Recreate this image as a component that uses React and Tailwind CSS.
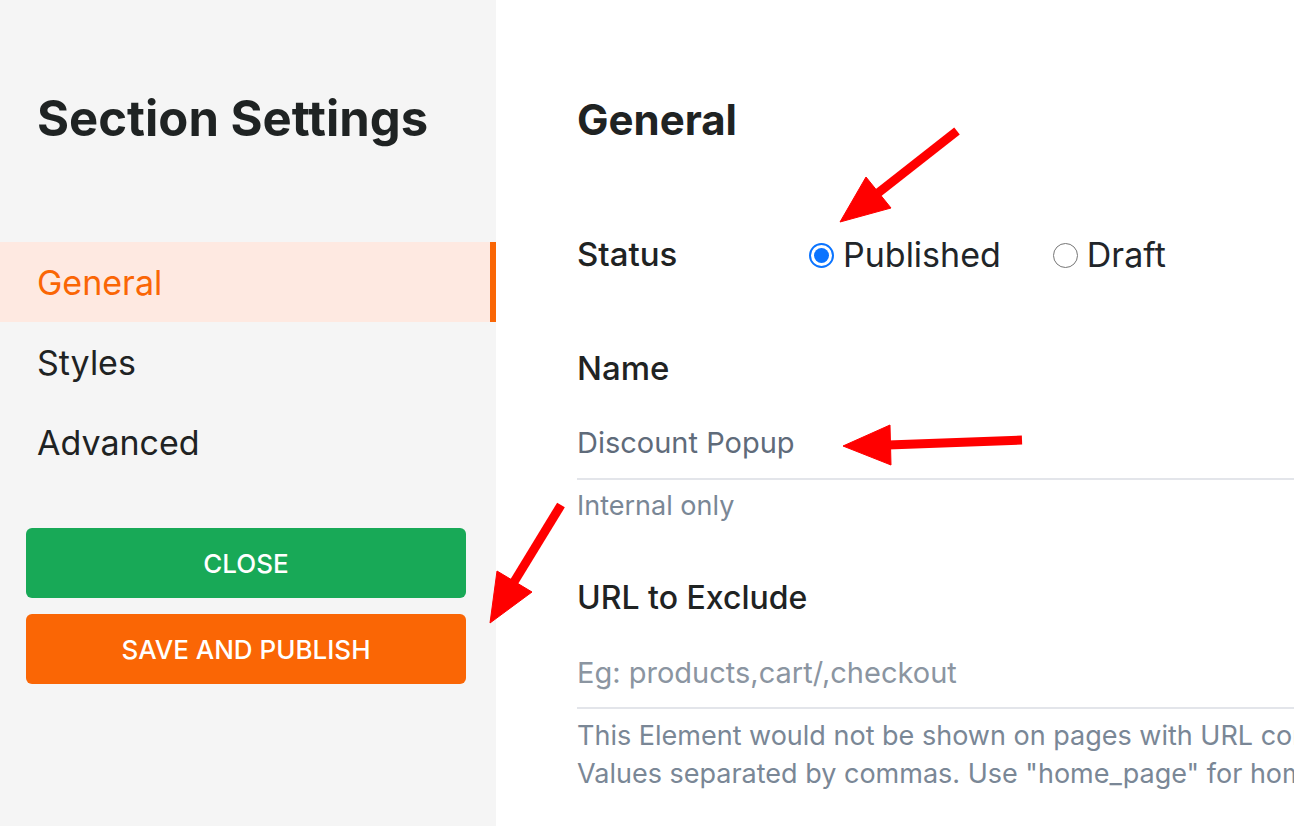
import React, { useState } from 'react';

const font = { fontFamily: 'Inter, "Open Sans", Arial, sans-serif' };

const Radio = ({ checked, label, onClick }) => (
    <button type="button" onClick={onClick} className="flex items-center gap-[9px]">
        {checked ? (
            <span className="w-[25px] h-[25px] rounded-full border-2 border-[#0b74ff] flex items-center justify-center bg-white">
                <span className="w-[15px] h-[15px] rounded-full bg-[#0b74ff]" />
            </span>
        ) : (
            <span className="w-[25px] h-[25px] rounded-full border-[1.5px] border-[#767676] bg-white" />
        )}
        <span className="text-[34px] text-[#212529] leading-none">{label}</span>
    </button>
);

const App = () => {
    const [tab, setTab] = useState('General');
    const [status, setStatus] = useState('Published');
    const [name, setName] = useState('Discount Popup');
    const [urls, setUrls] = useState('');

    const tabs = ['General', 'Styles', 'Advanced'];

    return (
        <div className="relative flex w-full h-[826px] overflow-hidden bg-white" style={font}>
            {/* sidebar */}
            <div className="w-[496px] shrink-0 bg-[#f5f5f5] pt-[78px] flex flex-col">
                <div className="h-[80px] flex items-center pl-[37px]">
                    <h1 className="text-[49px] font-bold text-[#1f2323] leading-none">Section Settings</h1>
                </div>
                <nav className="mt-[84px] flex flex-col">
                    {tabs.map((t) => (
                        <button
                            key={t}
                            type="button"
                            onClick={() => setTab(t)}
                            className={
                                t === tab
                                    ? 'h-[80px] flex items-center pl-[37px] bg-[#fee9e1] border-r-[6px] border-[#fa6605] text-[#fa6605] text-[34px] text-left'
                                    : 'h-[80px] flex items-center pl-[37px] text-[#1f2323] text-[34px] text-left'
                            }
                        >
                            {t}
                        </button>
                    ))}
                </nav>
                <div className="mt-[46px] pl-[26px] pr-[30px] flex flex-col gap-[16px]">
                    <button type="button" className="h-[70px] rounded-[6px] bg-[#18a957] text-white text-[26px] font-medium">
                        CLOSE
                    </button>
                    <button type="button" className="h-[70px] rounded-[6px] bg-[#fa6605] text-white text-[26px] font-medium">
                        SAVE AND PUBLISH
                    </button>
                </div>
            </div>

            {/* main */}
            <div className="flex-1 min-w-0 pl-[81px] pt-[90px] flex flex-col">
                <div className="h-[60px] flex items-center">
                    <h2 className="text-[42px] font-bold text-[#1f2323] leading-none">General</h2>
                </div>

                <div className="mt-[80px] h-[50px] flex items-center">
                    <span className="w-[232px] text-[33px] font-medium text-[#1f2323]">Status</span>
                    <div className="flex items-center gap-[52px]">
                        <Radio checked={status === 'Published'} label="Published" onClick={() => setStatus('Published')} />
                        <Radio checked={status === 'Draft'} label="Draft" onClick={() => setStatus('Draft')} />
                    </div>
                </div>

                <div className="mt-[64px] h-[50px] flex items-center">
                    <span className="text-[33px] font-medium text-[#1f2323]">Name</span>
                </div>
                <input
                    value={name}
                    onChange={(e) => setName(e.target.value)}
                    className="mt-[12px] h-[74px] w-[900px] border-b-2 border-[#e3e5ea] text-[29px] text-[#5f6b7a] outline-none bg-transparent"
                />
                <div className="mt-[6px] h-[40px] flex items-center text-[27px] text-[#7a8796]">Internal only</div>

                <div className="mt-[47px] h-[50px] flex items-center">
                    <span className="text-[32px] font-medium text-[#1f2323]">URL to Exclude</span>
                </div>
                <input
                    value={urls}
                    onChange={(e) => setUrls(e.target.value)}
                    placeholder="Eg: products,cart/,checkout"
                    className="mt-[14px] h-[72px] w-[900px] border-b-2 border-[#e3e5ea] text-[29px] text-[#5f6b7a] placeholder:text-[#8b95a1] outline-none bg-transparent"
                />
                <div className="mt-[8px] text-[27px] leading-[38px] text-[#7a8796] whitespace-nowrap">
                    <div>This Element would not be shown on pages with URL containing any of these words.</div>
                    <div>Values separated by commas. Use "home_page" for homepage.</div>
                </div>
            </div>

            {/* annotation arrows */}
            <svg className="absolute inset-0 pointer-events-none" width="1294" height="826" viewBox="0 0 1294 826">
                <g fill="#ff0000" stroke="#ff0000">
                    <line x1="957" y1="131" x2="878" y2="193" strokeWidth="9" />
                    <polygon points="840,222 866,177 891,208" strokeWidth="1" />
                    <line x1="1022" y1="440" x2="888" y2="445" strokeWidth="9" />
                    <polygon points="843,446 890,425 891,465" strokeWidth="1" />
                    <line x1="561" y1="505" x2="514" y2="582" strokeWidth="9" />
                    <polygon points="490,623 497,571 532,592" strokeWidth="1" />
                </g>
            </svg>
        </div>
    );
};

export default App;
